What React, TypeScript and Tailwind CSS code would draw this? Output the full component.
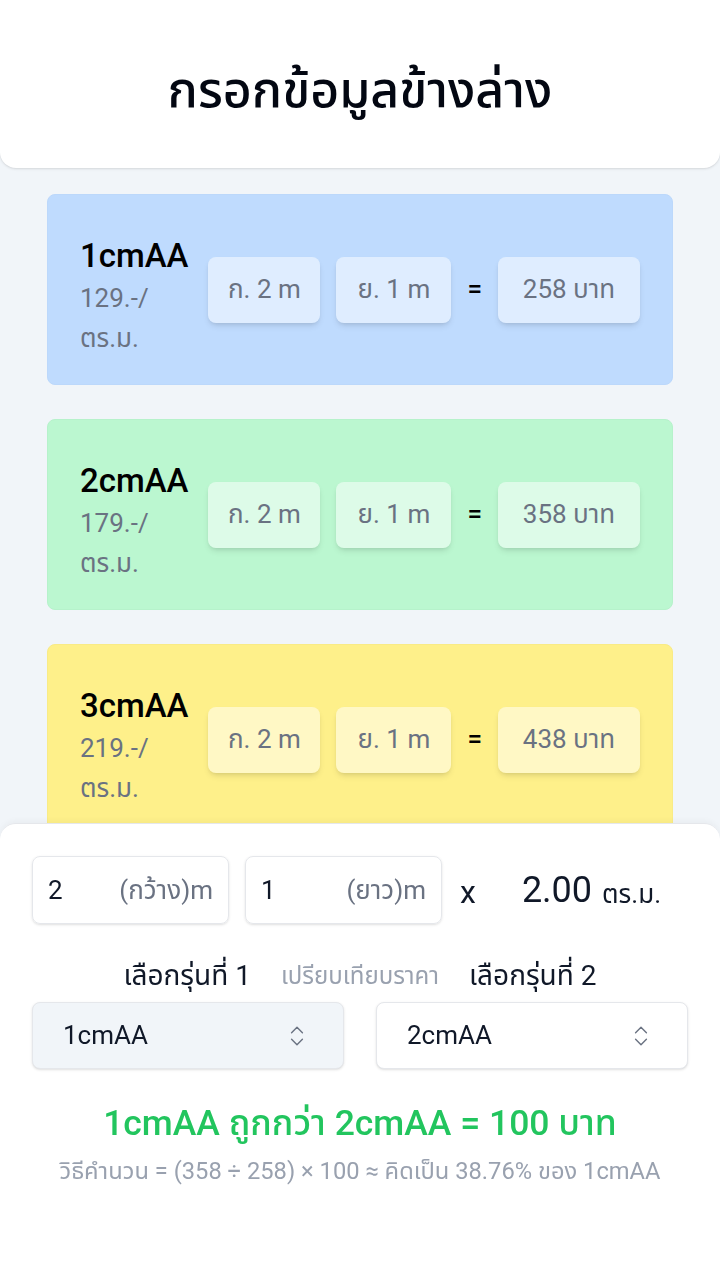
import React, { useState } from "react";
import { ChevronsUpDown } from "lucide-react";

type Model = {
  name: string;
  price: number;
  card: string;
};

const MODELS: Model[] = [
  { name: "1cmAA", price: 129, card: "bg-[#bfdbfe] border-[#bcd8fb]" },
  { name: "2cmAA", price: 179, card: "bg-[#bbf7d0] border-[#b6f2cb]" },
  { name: "3cmAA", price: 219, card: "bg-[#fef08a] border-[#f9eb86]" },
];

// thai runs get a narrower width, latin stays normal
function Tx({ children }: { children: string }) {
  const parts = children.split(/([\u0E00-\u0E7F]+)/);
  return (
    <span>
      {parts.map((p, i) =>
        /[\u0E00-\u0E7F]/.test(p) ? (
          <span key={i} className="font-stretch-[87.5%]">
            {p}
          </span>
        ) : (
          p
        )
      )}
    </span>
  );
}

export default function App() {
  const [w, setW] = useState("2");
  const [l, setL] = useState("1");
  const [a, setA] = useState("1cmAA");
  const [b, setB] = useState("2cmAA");

  const wide = parseFloat(w) || 0;
  const long = parseFloat(l) || 0;
  const area = wide * long;
  const totalOf = (name: string) => {
    const m = MODELS.find((x) => x.name === name)!;
    return Math.round(m.price * area);
  };
  const ta = totalOf(a);
  const tb = totalOf(b);
  const cheaper = ta <= tb ? a : b;
  const pricier = ta <= tb ? b : a;
  const diff = Math.abs(ta - tb);
  const lo = Math.min(ta, tb);
  const hi = Math.max(ta, tb);
  const pct = lo ? (((hi - lo) / lo) * 100).toFixed(2) : "0.00";

  const box = "bg-white/50 shrink-0 h-[66px] mb-3 rounded-lg shadow-md flex items-center justify-center text-[26px] text-gray-500";

  return (
    <div className="min-h-screen bg-slate-100 font-['Roboto','Noto_Sans_Thai','Noto_Sans',sans-serif] pb-[460px]">
      <header className="bg-white rounded-b-2xl shadow-sm h-[168px] flex items-center justify-center pt-3">
        <h1 className="text-[50px] font-medium text-gray-950">
          <Tx>กรอกข้อมูลข้างล่าง</Tx>
        </h1>
      </header>

      <div className="px-[47px] pt-[26px] flex flex-col gap-[34px]">
        {MODELS.map((m) => (
          <div key={m.name} className={`${m.card} border rounded-lg px-8 pt-[38px] pb-[26px] flex items-center gap-4`}>
            <div className="flex-1 min-w-0">
              <div className="text-[33px] font-medium text-black leading-[45px]">{m.name}</div>
              <div className="text-[26px] text-gray-500 leading-10">
                <Tx>{`${m.price}.-/ ตร.ม.`}</Tx>
              </div>
            </div>
            <div className={`${box} w-[112px]`}>
              <Tx>{`ก. ${w || 0} m`}</Tx>
            </div>
            <div className={`${box} w-[115px]`}>
              <Tx>{`ย. ${l || 0} m`}</Tx>
            </div>
            <div className="shrink-0 mb-3 text-[26px] font-medium text-black">=</div>
            <div className={`${box} w-[142px]`}>
              <Tx>{`${Math.round(m.price * area)} บาท`}</Tx>
            </div>
          </div>
        ))}
      </div>

      <div className="fixed bottom-0 inset-x-0 h-[457px] bg-white rounded-t-2xl border-t border-gray-200 shadow-[0_-2px_6px_rgba(0,0,0,0.04)] px-8 pt-8">
        <div className="flex items-center">
          <label className="w-[197px] h-[68px] border border-gray-200 rounded-lg shadow-sm flex items-center px-[15px] text-[26px]">
            <input
              value={w}
              onChange={(e) => setW(e.target.value)}
              className="w-0 flex-1 outline-none bg-transparent text-gray-900"
            />
            <span className="text-gray-500">
              <Tx>(กว้าง)m</Tx>
            </span>
          </label>
          <label className="ml-4 w-[197px] h-[68px] border border-gray-200 rounded-lg shadow-sm flex items-center px-[15px] text-[26px]">
            <input
              value={l}
              onChange={(e) => setL(e.target.value)}
              className="w-0 flex-1 outline-none bg-transparent text-gray-900"
            />
            <span className="text-gray-500">
              <Tx>(ยาว)m</Tx>
            </span>
          </label>
          <span className="ml-[18px] text-[32px] text-gray-900 pt-1">x</span>
          <span className="ml-[46px] text-[36px] text-gray-900">{area.toFixed(2)}</span>
          <span className="ml-2.5 text-[26px] text-gray-900 pt-2">
            <Tx>ตร.ม.</Tx>
          </span>
        </div>

        <div className="mt-[31px] flex items-center justify-center gap-[30px]">
          <span className="text-[28px] text-gray-900">
            <Tx>เลือกรุ่นที่ 1</Tx>
          </span>
          <span className="text-2xl text-gray-400">
            <Tx>เปรียบเทียบราคา</Tx>
          </span>
          <span className="text-[28px] text-gray-900">
            <Tx>เลือกรุ่นที่ 2</Tx>
          </span>
        </div>

        <div className="mt-[5px] grid grid-cols-2 gap-8">
          <div className="relative">
            <select
              value={a}
              onChange={(e) => setA(e.target.value)}
              className="appearance-none w-full h-[67px] rounded-lg border border-gray-200 bg-slate-100 shadow-sm px-[30px] text-[26px] text-gray-900 outline-none"
            >
              {MODELS.map((m) => (
                <option key={m.name}>{m.name}</option>
              ))}
            </select>
            <ChevronsUpDown className="absolute right-[34px] top-1/2 -translate-y-1/2 w-[26px] h-[26px] text-gray-500 pointer-events-none" strokeWidth={1.3} />
          </div>
          <div className="relative">
            <select
              value={b}
              onChange={(e) => setB(e.target.value)}
              className="appearance-none w-full h-[67px] rounded-lg border border-gray-200 bg-white shadow-sm px-[30px] text-[26px] text-gray-900 outline-none"
            >
              {MODELS.map((m) => (
                <option key={m.name}>{m.name}</option>
              ))}
            </select>
            <ChevronsUpDown className="absolute right-[34px] top-1/2 -translate-y-1/2 w-[26px] h-[26px] text-gray-500 pointer-events-none" strokeWidth={1.3} />
          </div>
        </div>

        <div className="mt-[28px] text-center text-[35.5px] font-medium text-[#22c55e]">
          <Tx>{`${cheaper} ถูกกว่า ${pricier} = ${diff} บาท`}</Tx>
        </div>
        <div className="mt-1 text-center text-[23.7px] text-gray-400">
          <Tx>{`วิธีคำนวน = (${hi} ÷ ${lo}) × 100 ≈ คิดเป็น ${pct}% ของ ${cheaper}`}</Tx>
        </div>
      </div>
    </div>
  );
}
